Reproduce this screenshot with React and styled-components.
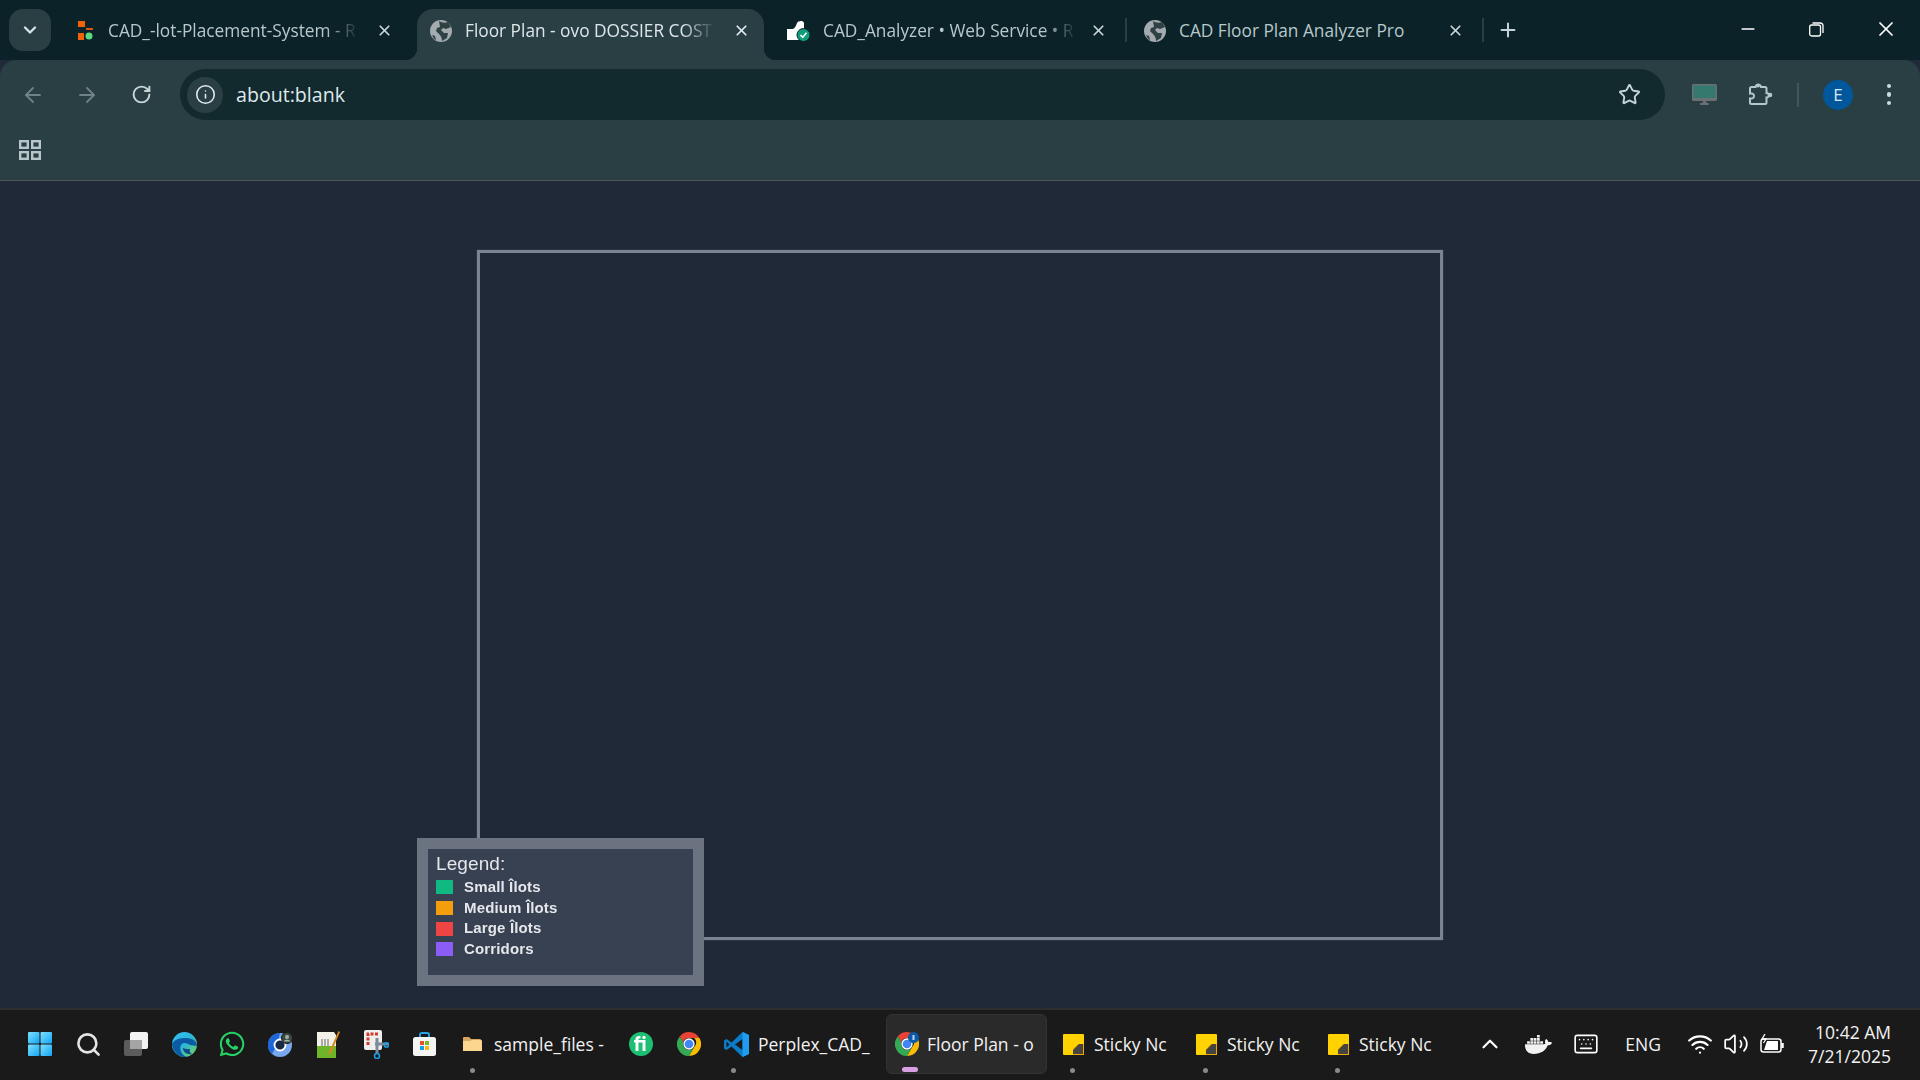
import React from "react";
import styled, { createGlobalStyle } from "styled-components";
import {
  ArrowLeft,
  ArrowRight,
  ChevronDown,
  ChevronUp,
  Info,
  Keyboard,
  Minus,
  Plus,
  RotateCw,
  Search,
  Star,
  Volume2,
  Wifi,
  X,
} from "lucide-react";
import { FaWhatsapp, FaDocker } from "react-icons/fa";

const UI_FONT = `"Open Sans", "Noto Sans", sans-serif`;

const TABS = [
  { title: "CAD_-lot-Placement-System - R", icon: "replit", fade: true },
  { title: "Floor Plan - ovo DOSSIER COST", icon: "globe", fade: true, active: true },
  { title: "CAD_Analyzer • Web Service • R", icon: "render", fade: true, line: true },
  { title: "CAD Floor Plan Analyzer Pro", icon: "globe", line: true },
];

const LEGEND = [
  { label: "Small Îlots", color: "#10b981" },
  { label: "Medium Îlots", color: "#f59e0b" },
  { label: "Large Îlots", color: "#ef4444" },
  { label: "Corridors", color: "#8b5cf6" },
];

const GlobeIcon = () => (
  <svg width="22" height="22" viewBox="0 0 22 22">
    <circle cx="11" cy="11" r="11" fill="#a3abae" />
    <path d="M9 1c3 2 6 2 9 1l3 5-5 2-3-1-2 2 3 3 4 0-1 5-5 3c0-3-1-5-3-7l-3-3 1-3 3-1z" fill="#2f4145" />
    <path d="M2 15l3 1 1 4-2-1z" fill="#2f4145" />
  </svg>
);

const ReplitIcon = () => (
  <svg width="17" height="22" viewBox="0 0 17 22">
    <rect x="0" y="1" width="7" height="6" fill="#f26207" />
    <rect x="8" y="8" width="7" height="2" fill="#d9570a" />
    <rect x="0" y="13" width="6" height="7" fill="#f26207" />
    <circle cx="11" cy="16" r="3.5" fill="#5fd97f" />
  </svg>
);

const RenderIcon = () => (
  <svg width="23" height="22" viewBox="0 0 23 22">
    <path d="M0 9h6c2-1 3-3 4-6 1-2 6-3 7 0v8l-5 9H0z" fill="#fff" />
    <circle cx="16.5" cy="15" r="6.5" fill="#0f9d7a" stroke="#0a2228" strokeWidth="1" />
    <path d="M13.5 15l2.2 2.4 3.8-4.6" fill="none" stroke="#fff" strokeWidth="1.6" />
  </svg>
);

const FAVICONS = { globe: GlobeIcon, replit: ReplitIcon, render: RenderIcon };

const GridIcon = () => (
  <svg width="22" height="20" viewBox="0 0 22 20" fill="none" stroke="#b9c6c9" strokeWidth="2.4">
    <rect x="1.2" y="1.2" width="7.6" height="6.6" />
    <rect x="13.2" y="1.2" width="7.6" height="6.6" />
    <rect x="1.2" y="12.2" width="7.6" height="6.6" />
    <rect x="13.2" y="12.2" width="7.6" height="6.6" />
  </svg>
);

const MonitorIcon = () => (
  <svg width="25" height="22" viewBox="0 0 25 22">
    <rect x="0.7" y="0.7" width="23.6" height="15.6" rx="1" fill="#35796e" stroke="#6b7073" strokeWidth="1.4" />
    <rect x="1" y="14" width="23" height="2.4" fill="#6b7073" />
    <path d="M11 16.5h3l.6 3h-4.2z" fill="#6b7073" />
    <rect x="8" y="19" width="9" height="2" rx="1" fill="#6b7073" />
  </svg>
);

const PuzzleIcon = () => (
  <svg width="26" height="26" viewBox="0 0 26 26" fill="none" stroke="#b4c8cc" strokeWidth="2">
    <path d="M3 6.5a1.5 1.5 0 0 1 1.5-1.5h4c.5-3 5-3 5.500 0h4A1.500 1.500 0 0 1 19.500 6.500v4.500c3-.5 3 5 0 4.500v5a1.500 1.500 0 0 1-1.500 1.500H4.500A1.500 1.500 0 0 1 3 20.500v-4c3 .5 4-1 4-2.500s-1-3-4-2.500z" />
    <circle cx="11" cy="3.400" r="2" fill="#b4c8cc" stroke="none" />
    <circle cx="23" cy="13" r="2.300" fill="#b4c8cc" stroke="none" />
  </svg>
);

const RestoreIcon = () => (
  <svg width="15" height="15" viewBox="0 0 15 15" fill="none" stroke="#fff" strokeWidth="1.300">
    <rect x="0.700" y="3" width="10.800" height="11" rx="2" />
    <path d="M3.500 1h7.500a3 3 0 0 1 3 3v7" />
  </svg>
);

const StartIcon = () => (
  <svg width="24" height="24" viewBox="0 0 24 24">
    <defs>
      <linearGradient id="winA" x1="0" y1="0" x2="1" y2="1">
        <stop offset="0" stopColor="#7fe0fb" />
        <stop offset="1" stopColor="#12a5f4" />
      </linearGradient>
    </defs>
    <rect x="0" y="0" width="11.500" height="11.500" rx="1" fill="url(#winA)" />
    <rect x="12.500" y="0" width="11.500" height="11.500" rx="1" fill="url(#winA)" />
    <rect x="0" y="12.500" width="11.500" height="11.500" rx="1" fill="url(#winA)" />
    <rect x="12.500" y="12.500" width="11.500" height="11.500" rx="1" fill="url(#winA)" />
  </svg>
);

const TaskViewIcon = () => (
  <svg width="24" height="24" viewBox="0 0 24 24">
    <rect x="0" y="8" width="18" height="16" rx="2" fill="#5c5c5c" />
    <rect x="6" y="0" width="18" height="17" rx="2" fill="#f2f2f2" />
    <rect x="6" y="8" width="12" height="9" fill="#a5a5a5" />
  </svg>
);

const EdgeIcon = () => (
  <svg width="25" height="25" viewBox="0 0 25 25">
    <defs>
      <linearGradient id="edgeA" x1="0" y1="0" x2="1" y2="1">
        <stop offset="0" stopColor="#35c1f1" />
        <stop offset="0.500" stopColor="#2bb5d8" />
        <stop offset="1" stopColor="#7bd84c" />
      </linearGradient>
    </defs>
    <circle cx="12.500" cy="12.500" r="12.500" fill="url(#edgeA)" />
    <path d="M0 12C1 21 8 26 15 25 9 23 7 17 9 13c2-3 6-2 9 0l7 1C25 8 19 6 13 6 7 6 2 8 0 12z" fill="#0c59a4" />
    <path d="M11 16c0 4 4 7 9 6-2-1-3-3-2-5-3 0-5 0-7-1z" fill="#114a8b" />
  </svg>
);

const ChromiumIcon = () => (
  <svg width="25" height="25" viewBox="0 0 25 25">
    <circle cx="12" cy="13" r="12" fill="#79a7ee" />
    <path d="M12 1a12 12 0 0 0-8 21L9 13l3-12z" fill="#1f66d8" />
    <circle cx="12" cy="13" r="5.500" fill="#1a2a44" stroke="#fff" strokeWidth="1.800" />
    <circle cx="19" cy="6" r="5.500" fill="#3c4a42" stroke="#1a1a1a" />
    <circle cx="19" cy="5" r="2" fill="#9db4a5" />
    <path d="M15.500 9.500c1-2.500 6-2.500 7 0z" fill="#9db4a5" />
  </svg>
);

const NotepadIcon = () => (
  <svg width="24" height="29" viewBox="0 0 24 29">
    <path d="M1 2h17l2 3v23H1z" fill="#f1f1ea" />
    <rect x="1" y="16" width="19" height="12" fill="#6fb52c" />
    <path d="M6 9v7M9 9v7M12 9v7" stroke="#666" strokeWidth="1" />
    <path d="M22.500 1L13 22l-1 3 3-2 9-21z" fill="#d98a1f" />
  </svg>
);

const SnipIcon = () => (
  <svg width="25" height="29" viewBox="0 0 25 29">
    <rect x="0" y="0" width="18" height="20" rx="2" fill="#eeeeee" />
    <path d="M4 15V4h11" fill="none" stroke="#d1382a" strokeWidth="3" strokeDasharray="3 1.500" />
    <path d="M13 8v16M11 14h13" stroke="#7b8b99" strokeWidth="3" />
    <circle cx="13" cy="26" r="2.500" fill="none" stroke="#1e9be0" strokeWidth="1.600" />
    <circle cx="22.500" cy="15" r="2.200" fill="none" stroke="#1e9be0" strokeWidth="1.600" />
  </svg>
);

const StoreIcon = () => (
  <svg width="23" height="24" viewBox="0 0 23 24">
    <path d="M7 6V2.500C7 1 8 1 9 1h5c1 0 2 0 2 1.500V6" fill="none" stroke="#29a5e5" strokeWidth="1.800" />
    <rect x="0" y="5" width="23" height="19" rx="2.500" fill="#f4f4f4" />
    <rect x="7" y="9" width="4" height="4" fill="#e8502c" />
    <rect x="12" y="9" width="4" height="4" fill="#79b92a" />
    <rect x="7" y="14" width="4" height="4" fill="#11a2ea" />
    <rect x="12" y="14" width="4" height="4" fill="#fbb814" />
  </svg>
);

const FolderIcon = () => (
  <svg width="19" height="16" viewBox="0 0 19 16">
    <path d="M0 2a1 1 0 0 1 1-1h5l2 2h9a1 1 0 0 1 1 1v2H0z" fill="#d9a760" />
    <path d="M0 15V5h7l2-1h9a1 1 0 0 1 1 1v10z" fill="#fbd68f" />
  </svg>
);

const FiverrIcon = () => (
  <svg width="24" height="24" viewBox="0 0 24 24">
    <circle cx="12" cy="12" r="12" fill="#1dbf73" />
    <path d="M6.500 19V10.500H5V8h1.500V7c0-2 1.500-3 3.500-3h1.500v2.500H10.500c-.7 0-1 .3-1 1V8h7v11h-3v-8.500h-4V19z" fill="#fff" />
    <circle cx="15" cy="5.500" r="1.700" fill="#fff" />
  </svg>
);

const ChromeIcon = ({ badge }) => (
  <svg width="24" height="24" viewBox="0 0 24 24">
    <path d="M12 0a12 12 0 0 1 10.400 6H12a6 6 0 0 0-5.700 4.200L2.700 4.400A12 12 0 0 1 12 0z" fill="#ea4335" />
    <path d="M22.400 6A12 12 0 0 1 12 24l5.200-9a6 6 0 0 0 0-9z" fill="#fbbc04" />
    <path d="M2.700 4.400A12 12 0 0 0 12 24l5.200-9a6 6 0 0 1-10.900-4.800z" fill="#34a853" />
    <circle cx="12" cy="12" r="5" fill="#4285f4" stroke="#fff" strokeWidth="1.300" />
    {badge && <circle cx="18.500" cy="5.500" r="5.500" fill="#0b5aa5" />}
    {badge && <rect x="17.500" y="3" width="2" height="5" fill="#bcd4ea" />}
  </svg>
);

const VscodeIcon = () => (
  <svg width="25" height="25" viewBox="0 0 25 25">
    <path d="M18.500 0L25 3v19l-6.500 3-11-10.500L2.500 18 0 16.500V8.500L2.500 7l5 3.500z" fill="#0a7cc9" />
    <path d="M18.500 7L11 12.500l7.500 5.500z" fill="#1a1a1a" />
    <path d="M18.500 0L25 3v19l-6.500 3z" fill="#1f9cf0" />
    <path d="M2.500 9.500v6l3-3z" fill="#1a1a1a" />
  </svg>
);

const StickyIcon = () => (
  <svg width="21" height="21" viewBox="0 0 21 21">
    <path d="M1 0h19a1 1 0 0 1 1 1v19a1 1 0 0 1-1 1H1a1 1 0 0 1-1-1V1a1 1 0 0 1 1-1z" fill="#ffd200" />
    <path d="M21 21V10h-6L10 15v6z" fill="#f0a800" />
    <path d="M20 10v10H10v-4l6-6z" fill="#46443e" />
  </svg>
);

const BatteryIcon = () => (
  <svg width="25" height="21" viewBox="0 0 25 21" fill="none" stroke="#fff" strokeWidth="1.500">
    <rect x="1" y="5" width="20" height="13" rx="2.500" />
    <path d="M22.500 9v5" strokeWidth="2.500" />
    <path d="M4 16l3-9h11v9z" fill="#fff" stroke="none" />
    <path d="M5 0L2 5h4L3.500 9" strokeWidth="1.300" />
  </svg>
);

const LAUNCHER = [
  <StartIcon />,
  <Search size={27} color="#e4e4e4" strokeWidth={2.300} />,
  <TaskViewIcon />,
  <EdgeIcon />,
  <FaWhatsapp size={28} color="#25d366" />,
  <ChromiumIcon />,
  <NotepadIcon />,
  <SnipIcon />,
  <StoreIcon />,
];

const App = () => (
  <Page>
    <GlobalStyle />
    <TabStrip>
      <TabSearch>
        <ChevronDown size={20} strokeWidth={2.800} color="#d7e4e6" />
      </TabSearch>
      {TABS.map((tab, i) => {
        const Favicon = FAVICONS[tab.icon];
        return (
          <React.Fragment key={tab.title}>
            <Tab $active={tab.active} $first={i === 0}>
              <Favicon />
              <TabTitle $active={tab.active} $fade={tab.fade}>
                {tab.title}
              </TabTitle>
              <TabClose>
                <X size={17} strokeWidth={2.400} color={tab.active ? "#e6eeef" : "#c9d6d8"} />
              </TabClose>
            </Tab>
            <TabGap $line={tab.line} />
          </React.Fragment>
        );
      })}
      <NewTab>
        <Plus size={22} strokeWidth={2.200} color="#c4d3d6" />
      </NewTab>
      <WindowControls>
        <WindowButton>
          <Minus size={20} strokeWidth={1.800} color="#fff" />
        </WindowButton>
        <WindowButton>
          <RestoreIcon />
        </WindowButton>
        <WindowButton>
          <X size={24} strokeWidth={1.700} color="#fff" />
        </WindowButton>
      </WindowControls>
    </TabStrip>

    <Toolbar>
      <NavButton>
        <ArrowLeft size={24} strokeWidth={1.800} color="#6f8286" />
      </NavButton>
      <NavButton>
        <ArrowRight size={24} strokeWidth={1.800} color="#6f8286" />
      </NavButton>
      <NavButton>
        <RotateCw size={21} strokeWidth={2.200} color="#c9d6d8" />
      </NavButton>
      <AddressBar>
        <SiteInfo>
          <Info size={21} strokeWidth={1.800} color="#e1e9ea" />
        </SiteInfo>
        <AddressText>about:blank</AddressText>
        <Star size={23} strokeWidth={2} color="#c4d3d6" />
      </AddressBar>
      <ToolSlot $w={56} $first>
        <MonitorIcon />
      </ToolSlot>
      <ToolSlot $w={56}>
        <PuzzleIcon />
      </ToolSlot>
      <ToolDivider />
      <ToolSlot $w={56}>
        <Avatar>E</Avatar>
      </ToolSlot>
      <ToolSlot $w={46}>
        <Kebab>
          <i />
          <i />
          <i />
        </Kebab>
      </ToolSlot>
    </Toolbar>

    <BookmarksBar>
      <GridIcon />
    </BookmarksBar>

    <Main>
      <Plan>
        <Legend>
          <LegendTitle>Legend:</LegendTitle>
          {LEGEND.map((item) => (
            <LegendRow key={item.label}>
              <Swatch $color={item.color} />
              <LegendLabel>{item.label}</LegendLabel>
            </LegendRow>
          ))}
        </Legend>
      </Plan>
    </Main>

    <Taskbar>
      {LAUNCHER.map((icon, i) => (
        <IconCell key={i}>{icon}</IconCell>
      ))}
      <AppButton $w={169} $pad={15} $gap={12} $running>
        <FolderIcon />
        <AppLabel>sample_files -</AppLabel>
      </AppButton>
      <IconCell>
        <FiverrIcon />
      </IconCell>
      <IconCell>
        <ChromeIcon />
      </IconCell>
      <AppButton $w={173} $pad={11} $gap={9} $running>
        <VscodeIcon />
        <AppLabel>Perplex_CAD_</AppLabel>
      </AppButton>
      <AppButton $w={161} $pad={8} $gap={8} $active>
        <ChromeIcon badge />
        <AppLabel>Floor Plan - o</AppLabel>
      </AppButton>
      <Spacer />
      <AppButton $w={133} $pad={11} $gap={10} $running>
        <StickyIcon />
        <AppLabel>Sticky Nc</AppLabel>
      </AppButton>
      <AppButton $w={132} $pad={11} $gap={10} $running>
        <StickyIcon />
        <AppLabel>Sticky Nc</AppLabel>
      </AppButton>
      <AppButton $w={133} $pad={11} $gap={10} $running>
        <StickyIcon />
        <AppLabel>Sticky Nc</AppLabel>
      </AppButton>
      <Tray>
        <TrayCell $w={36}>
          <ChevronUp size={26} strokeWidth={2} color="#fff" />
        </TrayCell>
        <TrayCell $w={60}>
          <FaDocker size={27} color="#f2f2f2" />
        </TrayCell>
        <TrayCell $w={36}>
          <Keyboard size={26} strokeWidth={1.500} color="#fff" />
        </TrayCell>
        <Lang>ENG</Lang>
        <TrayCell $w={36}>
          <Wifi size={26} strokeWidth={2} color="#fff" />
        </TrayCell>
        <TrayCell $w={36}>
          <Volume2 size={26} strokeWidth={1.600} color="#fff" />
        </TrayCell>
        <TrayCell $w={36}>
          <BatteryIcon />
        </TrayCell>
        <Clock>
          <span>10:42 AM</span>
          <span>7/21/2025</span>
        </Clock>
      </Tray>
    </Taskbar>
  </Page>
);

const GlobalStyle = createGlobalStyle`
  html,
  body {
    margin: 0;
    padding: 0;
    height: 100%;
    background: #1f2937;
    overflow: hidden;
  }
  #root {
    height: 100%;
  }
`;

const Page = styled.div`
  display: flex;
  flex-direction: column;
  height: 100vh;
  font-family: ${UI_FONT};
`;

const TabStrip = styled.div`
  display: flex;
  align-items: flex-end;
  height: 60px;
  flex: none;
  padding-left: 9px;
  background: #0a2228;
`;

const TabSearch = styled.div`
  display: flex;
  align-items: center;
  justify-content: center;
  align-self: flex-start;
  width: 42px;
  height: 42px;
  margin: 9px 9px 0 0;
  border-radius: 14px;
  background: #2a3f44;
`;

const Tab = styled.div`
  position: relative;
  display: flex;
  align-items: center;
  gap: 13px;
  box-sizing: border-box;
  width: 347px;
  height: 51px;
  padding: 0 14px 8px ${(p) => (p.$first ? "18px" : "13px")};
  border-radius: 16px 16px 0 0;
  background: ${(p) => (p.$active ? "#2a3f44" : "transparent")};

  ${(p) =>
    p.$active &&
    `
    &::before,
    &::after {
      content: "";
      position: absolute;
      bottom: 0;
      width: 12px;
      height: 12px;
    }
    &::before {
      left: -12px;
      background: radial-gradient(circle at 0 0, transparent 12px, #2a3f44 12.500px);
    }
    &::after {
      right: -12px;
      background: radial-gradient(circle at 100% 0, transparent 12px, #2a3f44 12.500px);
    }
  `}
`;

const TabTitle = styled.div`
  flex: 0 0 auto;
  white-space: nowrap;
  font-size: 17.300px;
  color: ${(p) => (p.$active ? "#dde6e8" : "#b8c8cb")};
  ${(p) =>
    p.$fade &&
    `
    mask-image: linear-gradient(90deg, #000 88%, rgba(0, 0, 0, 0.1) 100%);
  `}
`;

const TabClose = styled.div`
  display: flex;
  align-items: center;
  justify-content: center;
  width: 18px;
  flex: none;
  margin-left: auto;
`;

const TabGap = styled.div`
  flex: none;
  width: 10px;
  height: 24px;
  margin-bottom: 18px;
  background: ${(p) =>
    p.$line
      ? "linear-gradient(90deg, transparent 4px, #2a3f44 4px, #2a3f44 6px, transparent 6px)"
      : "none"};
`;

const NewTab = styled.div`
  display: flex;
  align-items: center;
  justify-content: center;
  align-self: flex-start;
  width: 40px;
  height: 60px;
`;

const WindowControls = styled.div`
  display: flex;
  align-self: flex-start;
  margin-left: auto;
`;

const WindowButton = styled.div`
  display: flex;
  align-items: center;
  justify-content: center;
  width: 69px;
  height: 58px;
`;

const Toolbar = styled.div`
  display: flex;
  align-items: center;
  box-sizing: border-box;
  flex: none;
  height: 60px;
  padding: 9px 0 0 6px;
  border-radius: 16px 16px 0 0;
  background: #2a3f44;
`;

const NavButton = styled.div`
  display: flex;
  align-items: center;
  justify-content: center;
  width: 54px;
`;

const AddressBar = styled.div`
  display: flex;
  align-items: center;
  box-sizing: border-box;
  flex: none;
  width: 1485px;
  height: 51px;
  margin-left: 12px;
  padding: 0 24px 0 7px;
  border-radius: 26px;
  background: #12292e;
`;

const SiteInfo = styled.div`
  display: flex;
  align-items: center;
  justify-content: center;
  width: 36px;
  height: 36px;
  border-radius: 50%;
  background: #2a3f44;
`;

const AddressText = styled.div`
  flex: 1;
  margin-left: 13px;
  font-size: 19.600px;
  color: #dfe8ea;
`;

const ToolSlot = styled.div`
  display: flex;
  align-items: center;
  justify-content: center;
  flex: none;
  width: ${(p) => p.$w}px;
  margin-left: ${(p) => (p.$first ? "11px" : "0")};
`;

const ToolDivider = styled.div`
  flex: none;
  width: 2px;
  height: 24px;
  margin: 0 11px 0 9px;
  background: #41565b;
`;

const Avatar = styled.div`
  display: flex;
  align-items: center;
  justify-content: center;
  width: 30px;
  height: 30px;
  border-radius: 50%;
  background: #01579b;
  color: #dbe8f2;
  font-size: 17px;
`;

const Kebab = styled.div`
  display: flex;
  flex-direction: column;
  gap: 4px;

  i {
    display: block;
    width: 4.500px;
    height: 4.500px;
    border-radius: 50%;
    background: #c4dfe4;
  }
`;

const BookmarksBar = styled.div`
  display: flex;
  align-items: center;
  box-sizing: content-box;
  flex: none;
  height: 60px;
  padding-left: 19px;
  border-bottom: 1px solid #4a5458;
  background: #2a3f44;
`;

const Main = styled.main`
  display: flex;
  justify-content: center;
  flex: 1;
  min-height: 0;
  padding-top: 69px;
  background: #1f2937;
`;

const Plan = styled.div`
  position: relative;
  box-sizing: border-box;
  width: 966px;
  height: 690px;
  border: 3px solid #7b8391;
  box-shadow: 0 0 1px #6b7280;
`;

const Legend = styled.div`
  position: absolute;
  left: -63px;
  bottom: -49px;
  box-sizing: border-box;
  width: 287px;
  height: 148px;
  padding: 4px 8px;
  border: 11px solid #6b7280;
  background: #374151;
  font-family: "Liberation Sans", Arial, sans-serif;
  color: #e5e7eb;
  filter: blur(0.400px);
`;

const LegendTitle = styled.div`
  height: 24px;
  font-size: 19px;
  line-height: 22px;
  letter-spacing: 0.100px;
`;

const LegendRow = styled.div`
  display: flex;
  align-items: center;
  height: 20.700px;
`;

const Swatch = styled.span`
  flex: none;
  width: 17px;
  height: 14px;
  margin-right: 11px;
  background: ${(p) => p.$color};
`;

const LegendLabel = styled.span`
  margin-top: -2px;
  font-size: 15px;
  font-weight: 700;
  letter-spacing: 0.150px;
`;

const Taskbar = styled.footer`
  display: flex;
  align-items: center;
  box-sizing: border-box;
  flex: none;
  height: 72px;
  padding: 0 0 2px 16px;
  border-top: 2px solid #2e2e2e;
  background: #1a1a1a;
`;

const IconCell = styled.div`
  display: flex;
  align-items: center;
  justify-content: center;
  flex: none;
  width: 48px;
`;

const AppButton = styled.div`
  position: relative;
  display: flex;
  align-items: center;
  gap: ${(p) => p.$gap}px;
  box-sizing: border-box;
  flex: none;
  width: ${(p) => p.$w}px;
  height: 60px;
  padding-left: ${(p) => p.$pad}px;
  border-radius: 6px;
  ${(p) => p.$active && "background: #2a2a2a; border: 1px solid #333;"}

  &::after {
    content: "";
    display: ${(p) => (p.$running || p.$active ? "block" : "none")};
    position: absolute;
    bottom: 1px;
    left: ${(p) => p.$pad + 7}px;
    width: ${(p) => (p.$active ? "16px" : "5px")};
    height: 5px;
    border-radius: 3px;
    background: ${(p) => (p.$active ? "#d9a0e4" : "#8a8a8a")};
  }
`;

const AppLabel = styled.span`
  flex: none;
  white-space: nowrap;
  font-size: 17.500px;
  color: #f2f2f2;
`;

const Spacer = styled.div`
  flex: none;
  width: 5px;
`;

const Tray = styled.div`
  display: flex;
  align-items: center;
  margin-left: auto;
  padding-right: 29px;
`;

const TrayCell = styled.div`
  display: flex;
  align-items: center;
  justify-content: center;
  flex: none;
  width: ${(p) => p.$w}px;
`;

const Lang = styled.div`
  flex: none;
  width: 78px;
  text-align: center;
  font-size: 17.500px;
  color: #f2f2f2;
`;

const Clock = styled.div`
  display: flex;
  flex-direction: column;
  align-items: flex-end;
  margin-left: 18px;
  font-size: 17.500px;
  line-height: 24px;
  color: #f2f2f2;
`;

export default App;
